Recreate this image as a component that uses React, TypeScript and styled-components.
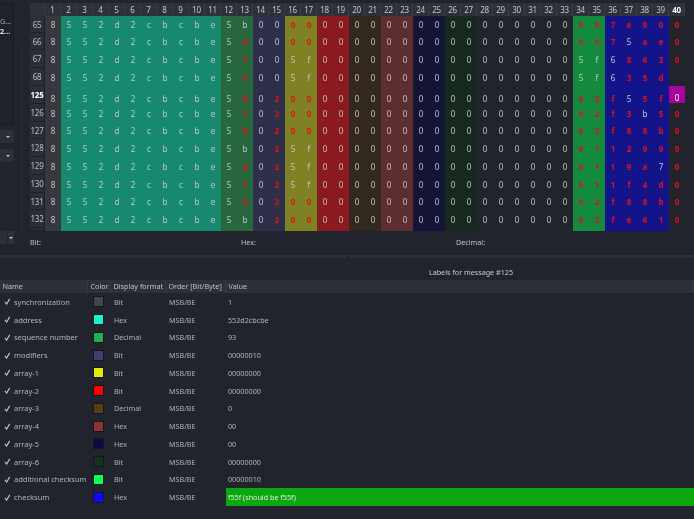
import React from "react";
import styled, { createGlobalStyle } from "styled-components";

const Global = createGlobalStyle`
  html, body { margin: 0; padding: 0; background: #21242d; }
  #root { width: 694px; height: 519px; overflow: hidden; }
`;

const Page = styled.div`
  width: 694px;
  height: 519px;
  display: flex;
  flex-direction: column;
  background: #21242d;
  color: #bcbdc1;
  font-family: "Noto Sans", "Open Sans", sans-serif;
  font-size: 7.2px;
  overflow: hidden;
  filter: blur(0.3px);
`;

const Top = styled.div`
  height: 255px;
  display: flex;
  flex: none;
`;

const Sidebar = styled.div`
  width: 30px;
  flex: none;
  display: flex;
`;

const SideColumn = styled.div`
  width: 14px;
  flex: none;
  display: flex;
  flex-direction: column;
  padding-top: 3px;
`;

const SideHandle = styled.div`
  width: 1px;
  height: 188px;
  margin: 43px 0 0 7px;
  background: #2a2d36;
`;

const TreePanel = styled.div`
  height: 122px;
  box-sizing: border-box;
  border: 1px solid #191b22;
  border-left: none;
  background: #1f222a;
  padding-top: 12px;
  overflow: hidden;
`;

const TreeLine = styled.div<{ $active?: boolean }>`
  height: 10px;
  line-height: 10px;
  white-space: nowrap;
  text-align: right;
  padding-right: 4px;
  color: ${(p) => (p.$active ? "#e8e8ea" : "#a5a7ac")};
  font-weight: ${(p) => (p.$active ? 700 : 400)};
`;

const SideButton = styled.div<{ $gap: number }>`
  height: 13px;
  margin-top: ${(p) => p.$gap}px;
  background: #2c2f38;
  border-radius: 0 2px 2px 0;
  display: flex;
  align-items: center;
  justify-content: flex-end;
  padding-right: 4px;
`;

const Arrow = styled.span`
  width: 0;
  height: 0;
  border-left: 2.5px solid transparent;
  border-right: 2.5px solid transparent;
  border-top: 2.5px solid #c5c6ca;
`;

const ComboRow = styled.div`
  display: flex;
  gap: 1px;
  margin-top: 69px;
  height: 13px;
`;

const ComboField = styled.div`
  width: 7px;
  background: #2c2f38;
  border-radius: 0 2px 2px 0;
`;

const ComboButton = styled.div`
  width: 6px;
  background: #2f323b;
  border-radius: 1px;
  display: flex;
  align-items: center;
  justify-content: center;
`;

const Main = styled.div`
  flex: 1;
  display: flex;
  flex-direction: column;
  padding-top: 3px;
  min-width: 0;
`;

const HeaderRow = styled.div`
  display: flex;
  height: 13px;
  flex: none;
  background: #2f3139;
  width: 655px;
`;

const HeaderCell = styled.div<{ $w: number; $active?: boolean }>`
  width: ${(p) => p.$w}px;
  flex: none;
  box-sizing: border-box;
  border-right: 1px solid #3a3c45;
  text-align: center;
  line-height: 13px;
  font-size: 8px;
  letter-spacing: -0.3px;
  color: ${(p) => (p.$active ? "#ffffff" : "#c4c5c9")};
  font-weight: ${(p) => (p.$active ? 700 : 400)};
`;

const Row = styled.div<{ $h: number }>`
  display: flex;
  height: ${(p) => p.$h}px;
  flex: none;
`;

const RowHead = styled.div<{ $active?: boolean }>`
  width: 15px;
  flex: none;
  box-sizing: border-box;
  background: #2b2d37;
  border-bottom: 1px solid #1d1f26;
  border-right: 1px solid #1d1f26;
  display: flex;
  align-items: center;
  justify-content: center;
  font-size: 8px;
  letter-spacing: -0.3px;
  color: ${(p) => (p.$active ? "#ffffff" : "#bcbdc2")};
  font-weight: ${(p) => (p.$active ? 700 : 400)};
`;

const Cell = styled.div<{ $bg: string; $red: boolean; $low: boolean; $sel: boolean }>`
  width: 16px;
  flex: none;
  box-sizing: border-box;
  background: ${(p) => (p.$sel ? "#a6049e" : p.$bg)};
  display: flex;
  align-items: center;
  justify-content: center;
  padding-top: ${(p) => (p.$low ? 6 : 0)}px;
  margin-bottom: ${(p) => (p.$sel ? 1 : 0)}px;
  font-size: 8px;
  color: ${(p) => (p.$sel ? "#ffffff" : p.$red ? "#e0101c" : "#c0c8c6")};
  font-weight: ${(p) => (p.$red ? 700 : 400)};
`;

const InfoBar = styled.div`
  display: flex;
  height: 19px;
  margin-top: 1px;
  align-items: center;
  flex: none;
`;

const InfoLabel = styled.div<{ $w: number }>`
  width: ${(p) => p.$w}px;
  flex: none;
  color: #c0c1c5;
`;

const Splitter = styled.div`
  height: 3px;
  flex: none;
  background: #2c2f38;
  display: flex;
  justify-content: center;
  gap: 1px;
`;

const Grip = styled.span`
  width: 1px;
  height: 1px;
  margin-top: 1px;
  background: #14151a;
`;

const LabelsTitle = styled.div`
  height: 22px;
  box-sizing: border-box;
  flex: none;
  text-align: right;
  padding: 8px 181px 0 0;
  line-height: 12px;
  color: #c8c9cd;
`;

const LabelTable = styled.div`
  display: flex;
  flex-direction: column;
`;

const TableHead = styled.div`
  display: grid;
  grid-template-columns: 88px 23px 55px 60px 1fr;
  height: 13px;
  background: #2d3038;
  flex: none;
`;

const TableHeadCell = styled.div`
  padding-left: 2.5px;
  line-height: 13px;
  border-right: 1px solid #363942;
  color: #c0c1c5;
`;

const TableRow = styled.div`
  display: grid;
  grid-template-columns: 88px 23px 55px 60px 1fr;
  height: 17.75px;
  align-items: stretch;
  flex: none;
`;

const NameCell = styled.div`
  display: flex;
  align-items: center;
  gap: 3px;
  padding-left: 4px;
  font-size: 7.5px;
  color: #b2b4b9;
`;

const Check = styled.svg`
  width: 7px;
  height: 7px;
  flex: none;
`;

const SwatchCell = styled.div`
  display: flex;
  align-items: center;
  padding-left: 5px;
`;

const Swatch = styled.span<{ $c: string }>`
  width: 9px;
  height: 9px;
  background: ${(p) => p.$c};
  border: 1px solid #14161c;
`;

const PlainCell = styled.div`
  display: flex;
  align-items: center;
  padding-left: 3px;
  color: #aeb0b5;
`;

const ValueCell = styled.div<{ $ok?: boolean }>`
  display: flex;
  align-items: center;
  padding-left: 2px;
  color: ${(p) => (p.$ok ? "#dff0dd" : "#b4b6ba")};
  background: ${(p) => (p.$ok ? "#0ca610" : "transparent")};
`;

const teal = "#17896f";
const colBg = (c: number): string => {
  if (c === 1) return "#35383c";
  if (c <= 11) return teal;
  if (c <= 13) return "#27683f";
  if (c <= 15) return "#2e3049";
  if (c <= 17) return "#7f8125";
  if (c <= 19) return "#8a1a1f";
  if (c <= 21) return "#33281f";
  if (c <= 23) return "#5c2e31";
  if (c <= 25) return "#131436";
  if (c <= 27) return "#17291f";
  if (c <= 33) return "#21242d";
  if (c <= 35) return "#138a3e";
  if (c <= 39) return "#14148a";
  return "#21242d";
};

type Tok = string;
const prefix = "8552d2cbcbe".split("");
const mid = "0".repeat(16).split("");
// "!" before a character marks it red
const rowsData: { n: number; h: number; c: Tok[] }[] = [
  { n: 65, h: 17, c: ["5", "b", "0", "0", "!0", "!0", "!0", "!0", "!7", "!e", "!9", "!0", "!0"] },
  { n: 66, h: 17, c: ["5", "!d", "0", "0", "!0", "!0", "!0", "!0", "!7", "5", "!a", "!e", "!0"] },
  { n: 67, h: 18, c: ["5", "!f", "0", "0", "5", "f", "5", "f", "6", "!8", "!6", "!3", "!0"] },
  { n: 68, h: 18, c: ["5", "!9", "0", "0", "5", "f", "5", "f", "6", "!3", "!5", "!d", ""] },
  { n: 125, h: 18, c: ["5", "!d", "0", "!2", "!0", "!0", "!0", "!2", "!f", "5", "!5", "!f", "0"] },
  { n: 126, h: 18, c: ["5", "!f", "0", "!2", "!0", "!0", "!0", "!2", "!f", "!3", "b", "!5", "!0"] },
  { n: 127, h: 17, c: ["5", "!9", "0", "!2", "!0", "!0", "!0", "!2", "!f", "!8", "!8", "!b", "!0"] },
  { n: 128, h: 18, c: ["5", "b", "0", "!2", "5", "f", "!6", "!1", "!1", "!2", "!9", "!9", "!0"] },
  { n: 129, h: 18, c: ["5", "!d", "0", "!2", "5", "f", "!6", "!1", "!1", "!9", "!a", "7", "!0"] },
  { n: 130, h: 18, c: ["5", "!f", "0", "!2", "5", "f", "!6", "!1", "!1", "!f", "!4", "!d", "!0"] },
  { n: 131, h: 17, c: ["5", "!9", "0", "!2", "!0", "!0", "!0", "!2", "!f", "!8", "!8", "!b", "!0"] },
  { n: 132, h: 18, c: ["5", "b", "0", "!2", "!0", "!0", "!0", "!2", "!f", "!e", "!6", "!1", "!0"] },
];

const expand = (c: Tok[]): Tok[] => [
  ...prefix,
  ...c.slice(0, 6),
  ...mid,
  ...c.slice(6),
];

const labels: [string, string, string, string][] = [
  ["synchronization", "#43464a", "Bit", "1"],
  ["address", "#17f5c8", "Hex", "552d2cbcbe"],
  ["sequence number", "#21ad52", "Decimal", "93"],
  ["modifiers", "#3f4070", "Bit", "00000010"],
  ["array-1", "#e6ea0a", "Bit", "00000000"],
  ["array-2", "#ff0000", "Bit", "00000000"],
  ["array-3", "#5a3d14", "Decimal", "0"],
  ["array-4", "#8f3238", "Hex", "00"],
  ["array-5", "#0a0a40", "Hex", "00"],
  ["array-6", "#12331c", "Bit", "00000000"],
  ["additional checksum", "#0dff55", "Bit", "00000010"],
  ["checksum", "#0a0aff", "Hex", "f55f (should be f55f)"],
];

export default function App() {
  return (
    <Page>
      <Global />
      <Top>
        <Sidebar>
          <SideColumn>
            <TreePanel>
              <TreeLine>G...</TreeLine>
              <TreeLine $active>2...</TreeLine>
            </TreePanel>
            <SideButton $gap={5}><Arrow /></SideButton>
            <SideButton $gap={6}><Arrow /></SideButton>
            <ComboRow>
              <ComboField />
              <ComboButton><Arrow /></ComboButton>
            </ComboRow>
          </SideColumn>
          <SideHandle />
        </Sidebar>
        <Main>
          <HeaderRow>
            <HeaderCell $w={15} />
            {Array.from({ length: 40 }, (_, i) => (
              <HeaderCell key={i} $w={16} $active={i === 39}>{i + 1}</HeaderCell>
            ))}
          </HeaderRow>
          {rowsData.map((r) => (
            <Row key={r.n} $h={r.h}>
              <RowHead $active={r.n === 125}>{r.n}</RowHead>
              {expand(r.c).map((t, i) => (
                <Cell
                  key={i}
                  $bg={colBg(i + 1)}
                  $red={t.startsWith("!")}
                  $low={r.n === 125}
                  $sel={r.n === 125 && i === 39}
                >
                  {t.replace("!", "")}
                </Cell>
              ))}
            </Row>
          ))}
          <Row $h={3}>
            <RowHead />
            {Array.from({ length: 40 }, (_, i) => (
              <Cell key={i} $bg={colBg(i + 1)} $red={false} $low={false} $sel={false} />
            ))}
          </Row>
          <InfoBar>
            <InfoLabel $w={211}>Bit:</InfoLabel>
            <InfoLabel $w={215}>Hex:</InfoLabel>
            <InfoLabel $w={100}>Decimal:</InfoLabel>
          </InfoBar>
        </Main>
      </Top>
      <Splitter>
        <Grip />
        <Grip />
      </Splitter>
      <LabelsTitle>Labels for message #125</LabelsTitle>
      <LabelTable>
        <TableHead>
          <TableHeadCell>Name</TableHeadCell>
          <TableHeadCell>Color</TableHeadCell>
          <TableHeadCell>Display format</TableHeadCell>
          <TableHeadCell>Order [Bit/Byte]</TableHeadCell>
          <TableHeadCell>Value</TableHeadCell>
        </TableHead>
        {labels.map(([name, color, fmt, val]) => (
          <TableRow key={name}>
            <NameCell>
              <Check viewBox="0 0 8 8">
                <path d="M1 4.5 L3 7 L6.5 1" fill="none" stroke="#c8c9cd" strokeWidth="1.2" />
              </Check>
              {name}
            </NameCell>
            <SwatchCell><Swatch $c={color} /></SwatchCell>
            <PlainCell>{fmt}</PlainCell>
            <PlainCell>MSB/BE</PlainCell>
            <ValueCell $ok={name === "checksum"}>{val}</ValueCell>
          </TableRow>
        ))}
      </LabelTable>
    </Page>
  );
}
